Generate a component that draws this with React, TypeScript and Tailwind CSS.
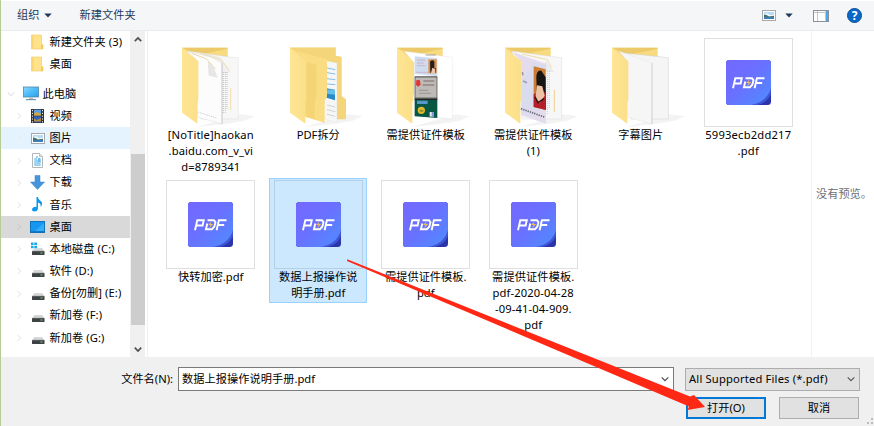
import type { ReactNode } from "react";

const fontStack = "font-['Noto_Sans','Noto_Sans_CJK_SC',sans-serif]";

function PictureIcon() {
  return (
    <svg width="14" height="11" viewBox="0 0 14 11">
      <rect x=".5" y=".5" width="13" height="10" fill="#fff" stroke="#a5a9ad" />
      <rect x="2" y="2" width="10" height="7" fill="#b9dcf5" />
      <path d="M2 4.500 5 3.300l3 2 4-.5V6H2Z" fill="#f4fafc" />
      <path d="M2 4.600 4.500 5 7 6.400l5-.6V7H2Z" fill="#4a6f6b" />
      <path d="M2 7h10v2H2Z" fill="#3b7fb5" />
    </svg>
  );
}

function SmallFolder() {
  return (
    <svg width="13" height="16" viewBox="0 0 13 16">
      <path d="M.5 1h10v9l1.500 1v4H.5Z" fill="#ffe28a" stroke="#f2cf6c" strokeWidth=".7" />
      <path d="M10 10.500h2V15h-2Z" fill="#f3cb5c" />
      <path d="M1 1.300h1.500v13.400H1Z" fill="#f8d674" />
    </svg>
  );
}

function Computer() {
  return (
    <svg width="16" height="15" viewBox="0 0 16 15">
      <defs>
        <linearGradient id="screen" x1="0" y1="0" x2="1" y2="1">
          <stop offset="0" stopColor="#8fd8ff" />
          <stop offset=".5" stopColor="#4cbcf8" />
          <stop offset="1" stopColor="#2aa0ec" />
        </linearGradient>
      </defs>
      <rect x=".5" y="1" width="15" height="10" fill="url(#screen)" stroke="#4f87a8" strokeWidth=".8" />
      <path d="M6 11.500h4v1.500H6Z" fill="#b4c2cb" />
      <path d="M3 13h10v1.200H3Z" fill="#7893a5" />
    </svg>
  );
}

function Film() {
  return (
    <svg width="13" height="14" viewBox="0 0 13 14">
      <rect width="13" height="14" fill="#333" />
      <rect x="3" y=".7" width="7" height="5.800" fill="#5b9ee8" />
      <path d="M3 4.500 6 3l4 2v1.500H3Z" fill="#d4a73a" />
      <rect x="3" y="7.300" width="7" height="6" fill="#2e62bd" />
      <path d="M3 9.500 6 11l4-2v3.500H3Z" fill="#b28a3a" />
      <path d="M1.500 1v13M11.500 1v13" stroke="#e8e8e8" strokeWidth="1" strokeDasharray="1.200 1.600" />
    </svg>
  );
}

function Doc() {
  return (
    <svg width="11" height="15" viewBox="0 0 11 15">
      <path d="M.5.5h7l3 3v11H.5Z" fill="#fff" stroke="#a0a4a8" strokeWidth=".8" />
      <path d="M7.500.5v3h3" fill="#e2e2e2" stroke="#a0a4a8" strokeWidth=".6" />
      <path d="M4 4h2M2.200 6h3M2.200 8h6.500M2.200 10h6.500M2.200 12h6.500" stroke="#3ba5e0" />
      <path d="M6 5h2.500v4H6Z" fill="#66bce8" />
    </svg>
  );
}

function Download() {
  return (
    <svg width="15" height="15" viewBox="0 0 15 15">
      <path d="M5 .5h5V7h4.500l-7 7.500L.5 7H5Z" fill="#4596dc" stroke="#3683ca" strokeWidth=".5" />
    </svg>
  );
}

function Note() {
  return (
    <svg width="11" height="15" viewBox="0 0 11 15">
      <path
        d="M4.500 0H6c.2 2.200 1.300 2.800 2.800 4C10.600 5.500 10.600 8 8.500 10 9 7.500 8.300 6.500 6 5.600V11c0 2.300-1.600 3.600-3.500 3.600C.9 14.600 0 13.700 0 12.600c0-1.700 2-3 4.500-2.700Z"
        fill="#0f96ee"
      />
    </svg>
  );
}

function DesktopIcon() {
  return (
    <svg width="15" height="12" viewBox="0 0 15 12">
      <rect x=".5" y=".5" width="14" height="11" fill="#1597f2" stroke="#1272ba" />
      <path d="m5 10 9-8v8Z" fill="#35adf8" />
      <path d="M1 10.700h13" stroke="#0d69ad" strokeWidth=".8" />
    </svg>
  );
}

function Drive({ system = false }: { system?: boolean }) {
  return (
    <svg width="14" height="14" viewBox="0 0 14 14">
      <path d="M3.200 6h8L13.500 9.500H1Z" fill="#d6d7d9" />
      <rect x="1" y="9" width="12.500" height="4" rx=".6" fill="#3f4144" />
      <path d="M1.200 9.200h12" stroke="#77797c" strokeWidth=".6" />
      <rect x="9.500" y="10.500" width="2" height="1" fill="#5fe36b" />
      {system && (
        <>
          <rect width="6.500" height="6.500" fill="#fff" />
          <path d="M0 .5h2.600v2.500H0ZM3.300.5H6v2.500H3.300ZM0 3.700h2.600v2.500H0ZM3.300 3.700H6v2.500H3.300Z" fill="#19a9ec" />
        </>
      )}
    </svg>
  );
}

function Chevron({ className, down = false }: { className: string; down?: boolean }) {
  return (
    <svg width="8" height="8" viewBox="0 0 8 8" className={className}>
      <path d={down ? "M.7 2.300 4 5.600l3.300-3.300" : "M2.500.8 5.700 4 2.500 7.200"} fill="none" stroke="currentColor" strokeWidth="1.100" />
    </svg>
  );
}

type TreeRow = { label: string; icon: ReactNode; state?: string };

const tree: TreeRow[] = [
  { label: "视频", icon: <Film /> },
  { label: "图片", icon: <PictureIcon />, state: "bg-[#e5f3ff]" },
  { label: "文档", icon: <Doc /> },
  { label: "下载", icon: <Download /> },
  { label: "音乐", icon: <Note /> },
  { label: "桌面", icon: <DesktopIcon />, state: "bg-[#d9d9d9]" },
  { label: "本地磁盘 (C:)", icon: <Drive system /> },
  { label: "软件 (D:)", icon: <Drive /> },
  { label: "备份[勿删] (E:)", icon: <Drive /> },
  { label: "新加卷 (F:)", icon: <Drive /> },
  { label: "新加卷 (G:)", icon: <Drive /> },
];

function Row({ label, icon, state = "", arrow = true }: TreeRow & { arrow?: boolean }) {
  const chevron = state === "bg-[#d9d9d9]" ? "text-[#cccccc]" : "text-[#ececec]";
  return (
    <div className={`flex h-[22.200px] shrink-0 items-center pl-[14px] ${state}`}>
      <span className="w-[15px]">{arrow && <Chevron className={chevron} />}</span>
      <span className="flex w-[15px] justify-center">{icon}</span>
      <span className="ml-[4.500px] tracking-[.08px]">{label}</span>
    </div>
  );
}

function FolderBack() {
  return (
    <>
      <path d="M240 238l42 6-30 13-60 10-84 9Z" fill="#eeeeee" opacity=".7" />
      <path d="M64 38H201V180H64Z" fill="#f8da80" />
      <path d="M64 38H201V41L110 60Z" fill="#edca69" />
    </>
  );
}

function FolderFront() {
  return <path d="M64 38 113 79V195l-3 8V266L64 233Z" fill="url(#folder)" />;
}

function Papers() {
  return (
    <>
      <path d="M100 54 233 68V252H120Z" fill="#f5f5f5" stroke="#d0d0d0" strokeWidth="1.500" />
      <path d="M84 48 184 84V267L110 246V78Z" fill="#f6f6f6" stroke="#dadada" />
      <path d="M184 84V267" stroke="#c4c4c4" strokeWidth="2" />
    </>
  );
}

function DocumentsContent() {
  return (
    <>
      <path d="M80 48 150 58l58 8 25 2v184H120Z" fill="#f7f7f7" stroke="#d0d0d0" />
      <path d="m130 55 50 14 27 42-25 4Z" fill="#f0f0f0" stroke="#d6d6d6" />
      <path d="m120 55 60 19 25 30" fill="none" stroke="#f2ddab" strokeWidth="3" />
      <path d="M188 112v124M194 112v124M199 112v110" stroke="#a9a9a9" strokeDasharray="2 4" strokeWidth="3" />
      <path d="M210 160v65" stroke="#f2ddab" strokeWidth="3" />
      <path d="M84 50 150 66l34 18v183l-74-21V78Z" fill="#fcfcfc" stroke="#cbcbcb" />
      <path d="m94 55 44 17 26 30" fill="none" stroke="#efd9a7" strokeWidth="3" />
      <path d="m143 80 2 41 24 6-9-24Z" fill="#e7e7e7" stroke="#cfcfcf" />
      <path d="M111 231l56 18" stroke="#b7b7b7" strokeDasharray="4 3" strokeWidth="2" />
      <path d="M184 84V267" stroke="#bdbdbd" strokeWidth="2" />
    </>
  );
}

function NestedContent() {
  return (
    <>
      <path d="M64 38H201V62l18 3V183l13 10v60H180V90Z" fill="#f4d57a" />
      <path d="M120 67 205 84V263L120 240Z" fill="#f6f6f6" stroke="#ddd" />
      <path d="m175 99 25 5M175 113l25 4M175 131l25 3M175 147l25 2" stroke="#6fb6e4" strokeWidth="2.500" />
      <path d="m175 210 25 6M175 224l25 6M175 238l25 6" stroke="#bfbfbf" strokeWidth="2" />
      <path d="m173 160 26 4v32l-26-8Z" fill="#288bc9" />
      <path d="m173 163 26 2v14l-26-3Z" fill="#65bde9" />
      <path d="m88 49 87 24V185l-7 12v66l-60-18V80Z" fill="#fadc83" />
      <path d="m113 80 30 10v95l-5 12v56l-28-10Z" fill="#f1cd6c" opacity=".55" />
    </>
  );
}

function CardsContent() {
  return (
    <>
      <path d="M86 49 230 67V252L115 240V84Z" fill="#fff" stroke="#d9d9d9" />
      <path d="M150 60h30" stroke="#777" strokeWidth="2" />
      <path d="m117 64 68 6v54l-68-7Z" fill="#cfdcf0" />
      <path d="M124 75h25M124 84h20M124 92h25M122 112h36" stroke="#cba0b4" strokeWidth="2" />
      <path d="M158 73h25v42h-25Z" fill="#dc9144" />
      <path d="M163 80q8-8 13 0v20h5v13h-17Z" fill="#252020" />
      <path d="m170 98 9 4v12h-13Z" fill="#eec4ae" />
      <path d="M117 124h68v67h-68Z" fill="#40393a" />
      <path d="M119 127h64v61h-64Z" fill="#bdbab8" />
      <path d="m122 136 10-2 3 15-8 6-6-6Z" fill="#e23532" />
      <path d="M143 138h33M141 150h35" stroke="#7d6a68" strokeWidth="3" />
      <path d="M130 166h28M130 175h36" stroke="#8a8785" strokeWidth="2" />
      <path d="M117 191h68v58l-68-5Z" fill="#075743" />
      <path d="M117 191h68v4h-68Z" fill="#242424" />
      <path d="M124 197h32v10h-32Z" fill="#5895cb" />
      <circle cx="137" cy="226" r="11" fill="#e3b927" />
      <path d="m131 224 12 1v5h-10Z" fill="#8b8f2f" />
      <path d="M162 231h12v14h-12Z" fill="#e9e9ef" />
      <path d="M168 231h6v14h-6Z" fill="#7c91cd" />
    </>
  );
}

function IdContent() {
  return (
    <>
      <path d="M85 48 210 65l24 3V252H115Z" fill="#f7f7f7" stroke="#cfcfcf" />
      <path d="m115 57 76 17 12 24" fill="none" stroke="#efdba8" strokeWidth="3" />
      <path d="M191 108v130M197 108v110" stroke="#999" strokeWidth="2" strokeDasharray="2 4" />
      <path d="M212 165v65" stroke="#efd18d" strokeWidth="3" />
      <path d="M85 50 187 86V266l-74-25V80Z" fill="#e4dcec" />
      <path d="m113 140 38-60 36 10V190l-35 55-39-15Z" fill="#d3dcf0" opacity=".6" />
      <path d="m150 94 36 9v122l-36-9Z" fill="#cd7d32" />
      <path d="m150 177 37-8v56l-37-9Z" fill="#b51f2b" />
      <path d="M158 129q0-24 15-22l13 20v45h-14l-13 20v-35Z" fill="#171414" />
      <path d="m160 151 16 3 7 28-15 22-13-15Z" fill="#edc3a5" />
      <path d="m154 185 9 18 18-12" stroke="#2a1515" strokeWidth="4" fill="none" />
      <path d="m116 111 2 10M118 138l12 5" stroke="#9c9cb4" strokeWidth="5" />
      <path d="m112 221 70 25" stroke="#6b6877" strokeWidth="5" strokeDasharray="4 3" />
      <path d="m186 80 22 30-20-4Z" fill="#eee" stroke="#ccc" />
    </>
  );
}

function Folder({ children }: { children: ReactNode }) {
  return (
    <svg className="shrink-0" width="89" height="89" viewBox="16 9 267 267">
      <defs>
        <linearGradient id="folder">
          <stop offset="0" stopColor="#ffe594" />
          <stop offset="1" stopColor="#fbdf89" />
        </linearGradient>
      </defs>
      <FolderBack />
      {children}
      <FolderFront />
    </svg>
  );
}

function PdfTile() {
  return (
    <div className="flex size-[89px] shrink-0 items-center justify-center border border-[#dfdfdf]">
      <svg width="45" height="45" viewBox="0 0 45 45">
        <defs>
          <linearGradient id="pdf" x1="0" y1="0" x2="1" y2="1">
            <stop offset="0" stopColor="#7468ff" />
            <stop offset=".45" stopColor="#6a70ff" />
            <stop offset="1" stopColor="#4d8dff" />
          </linearGradient>
          <clipPath id="tile">
            <rect width="45" height="45" rx="3.500" />
          </clipPath>
        </defs>
        <g clipPath="url(#tile)">
          <rect width="45" height="45" fill="#2935a8" />
          <path d="M0 0h45v34Q42 42 32 45H0Z" fill="#3f55d5" />
          <path d="M0 0h45v28Q41 42 25 45H0Z" fill="url(#pdf)" />
        </g>
        <g fill="none" stroke="#fff" strokeWidth="1.900">
          <path d="M7 28.200 9.300 18.300h6.500l-1.200 5.200H9" />
          <path d="m19.300 21.500-1.400 5.700h6l2.400-2.500 1.200-4.500-1.500-1.900h-6.500" />
          <path d="m28.600 28.200 2.300-9.900h7.600M30.200 23h6" />
        </g>
        <path d="m23.500 19.500-3.500 3.500h2.500L21 26.500l4.200-4.500h-2.500Z" fill="#f3bd4b" />
      </svg>
    </div>
  );
}

type Item = { lines: string[]; art: ReactNode; selected?: boolean; tracking?: string };

const items: Item[] = [
  { lines: ["[NoTitle]haokan", ".baidu.com_v_vi", "d=8789341"], art: <Folder><DocumentsContent /></Folder>, tracking: "tracking-[.12px]" },
  { lines: ["PDF拆分"], art: <Folder><NestedContent /></Folder> },
  { lines: ["需提供证件模板"], art: <Folder><CardsContent /></Folder> },
  { lines: ["需提供证件模板", "(1)"], art: <Folder><IdContent /></Folder> },
  { lines: ["字幕图片"], art: <Folder><Papers /></Folder> },
  { lines: ["5993ecb2dd217", ".pdf"], art: <PdfTile />, tracking: "tracking-[.2px]" },
  { lines: ["快转加密.pdf"], art: <PdfTile /> },
  { lines: ["数据上报操作说", "明手册.pdf"], art: <PdfTile />, selected: true },
  { lines: ["需提供证件模板.", "pdf"], art: <PdfTile /> },
  { lines: ["需提供证件模板.", "pdf-2020-04-28", "-09-41-04-909.", "pdf"], art: <PdfTile />, tracking: "tracking-[.12px]" },
];

function FileItem({ lines, art, selected, tracking = "" }: Item) {
  return (
    <div className="flex justify-center">
      <div
        className={`flex w-[98px] flex-col items-center border pt-px ${
          selected ? "h-[125px] border-[#99d1ff] bg-[#cce8ff] [&>div:first-child]:border-[#b5d0e3]" : "border-transparent"
        }`}
      >
        {art}
        <div className={`text-center leading-[15.900px] whitespace-nowrap ${tracking}`}>
          {lines.map((line) => (
            <div key={line}>{line}</div>
          ))}
        </div>
      </div>
    </div>
  );
}

function Caret() {
  return (
    <svg width="8" height="5" viewBox="0 0 8 5">
      <path d="M.3.5h7.400L4 4.500Z" fill="#1e395b" />
    </svg>
  );
}

export default function App() {
  return (
    <div className={`relative flex h-[426px] w-[874px] flex-col overflow-hidden border-l border-[#b9cc96] bg-[#f0f0f0] text-[11.200px] text-black ${fontStack}`}>
      <header className="flex h-[31px] shrink-0 items-center border-t border-b border-t-white border-b-[#e9ebed] bg-[#f5f6f7] pl-4 text-[#1e395b]">
        <span>组织</span>
        <span className="ml-[5px]"><Caret /></span>
        <span className="ml-[27px] tracking-[.1px]">新建文件夹</span>
        <span className="ml-auto"><PictureIcon /></span>
        <span className="ml-[9px]"><Caret /></span>
        <svg className="ml-[20px]" width="16" height="12" viewBox="0 0 16 12">
          <rect x=".5" y=".5" width="15" height="11" fill="#fff" stroke="#8c9198" />
          <path d="M1 2.500h11M4.500 1v10" stroke="#b4b7bb" strokeWidth=".8" />
          <path d="M12.500 1H15v10h-2.500Z" fill="#4ca7e8" />
        </svg>
        <span className="mr-[12px] ml-[18px] flex size-[15px] items-center justify-center rounded-full border border-[#084f9c] bg-[#0868c9] text-[12px] leading-none font-bold text-white">?</span>
      </header>

      <main className="flex h-[326px] shrink-0 bg-white">
        <nav className="flex w-[128.500px] shrink-0 flex-col whitespace-nowrap">
          <Row label="新建文件夹 (3)" icon={<SmallFolder />} arrow={false} />
          <Row label="桌面" icon={<SmallFolder />} arrow={false} />
          <div className="mt-[7.500px] flex h-[22.200px] shrink-0 items-center pl-[6px]">
            <Chevron down className="text-[#e2e2e2]" />
            <span className="ml-[7.500px]"><Computer /></span>
            <span className="ml-[4px]">此电脑</span>
          </div>
          {tree.map((row) => (
            <Row key={row.label} {...row} />
          ))}
        </nav>
        <div className="ml-[.5px] flex w-[15px] shrink-0 flex-col items-center bg-[#f0f0f0] text-[#505050]">
          <svg className="mt-[5px] shrink-0" width="8" height="7" viewBox="0 0 8 7">
            <path d="m.8 5.200 3.200-3.300 3.200 3.300" fill="none" stroke="currentColor" strokeWidth="1.700" />
          </svg>
          <div className="mt-[111px] h-[171px] w-[14px] bg-[#cdcdcd]" />
          <svg className="mt-[21px] shrink-0" width="8" height="7" viewBox="0 0 8 7">
            <path d="m.8 1.700 3.200 3.300 3.200-3.300" fill="none" stroke="currentColor" strokeWidth="1.700" />
          </svg>
        </div>
        <section className="ml-[2px] grid w-[664px] shrink-0 grid-cols-[repeat(6,107.500px)] grid-rows-[142px_142px] border-l border-[#f0f0f0] pt-[5px] pl-[9px]">
          {items.map((item) => (
            <FileItem key={item.lines.join("")} {...item} />
          ))}
        </section>
        <aside className="flex flex-1 items-center border-l border-[#f2f2f2] pl-[4px] whitespace-nowrap text-[#707070]">
          没有预览。
        </aside>
      </main>

      <footer className="flex flex-1 flex-col pt-[10px]">
        <div className="flex h-[24px] items-center">
          <label className="w-[177px] pr-[5px] text-right">文件名(N):</label>
          <div className="flex h-[24px] w-[496px] items-center justify-between border border-[#7a7a7a] bg-white pr-[4px] pl-[3px]">
            <span className="tracking-[.05px]">数据上报操作说明手册.pdf</span>
            <Chevron down className="text-[#444]" />
          </div>
          <div className="ml-[11px] flex h-[23px] w-[175px] items-center justify-between border border-[#adadad] bg-[#e1e1e1] pr-[4px] pl-[3px] whitespace-nowrap">
            <span className="tracking-[.17px]">All Supported Files (*.pdf)</span>
            <Chevron down className="text-[#555]" />
          </div>
        </div>
        <div className="mt-[6px] flex gap-[13px] pl-[685px]">
          <button className="h-[22px] w-[80px] border-2 border-[#0078d7] bg-[#e1e1e1] leading-none">打开(O)</button>
          <button className="h-[22px] w-[80px] border border-[#adadad] bg-[#e1e1e1] leading-none">取消</button>
        </div>
      </footer>

      <svg className="pointer-events-none absolute top-0 -left-px" width="874" height="426" viewBox="0 0 874 426">
        <path d="M347.200 259.300 690 396.500 694 395 705 407 687.500 410 689 406.500 347 261Z" fill="#ff2815" />
        <path d="M872 418v2M872 422v2M868 422v2" stroke="#bcbcbc" strokeWidth="2" />
      </svg>
    </div>
  );
}
